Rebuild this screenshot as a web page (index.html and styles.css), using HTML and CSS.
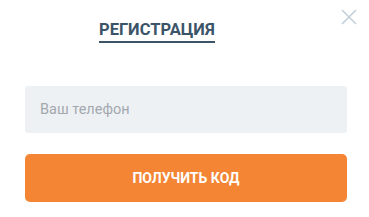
FILE: index.html
```html
<!DOCTYPE html>
<html lang="ru">
<head>
<meta charset="utf-8">
<link rel="stylesheet" href="styles.css">
</head>
<body>
<div class="modal">
  <div class="head">
    <span class="tab">РЕГИСТРАЦИЯ</span>
    <button class="close" aria-label="Закрыть">
      <svg width="16" height="16" viewBox="0 0 16 16"><path d="M1 1L15 15M15 1L1 15" stroke="#c3d0dc" stroke-width="1.6" fill="none"/></svg>
    </button>
  </div>
  <div class="form">
    <div class="field">Ваш телефон</div>
    <button class="submit">ПОЛУЧИТЬ КОД</button>
  </div>
</div>
</body>
</html>
```
FILE: styles.css
```css
html, body { margin: 0; padding: 0; background: #fff; }
body { font-family: Roboto, "Liberation Sans", sans-serif; }
.modal { width: 369px; height: 217px; position: relative; box-sizing: border-box; padding: 0 22px 0 25px; }
.head { height: 86px; box-sizing: border-box; padding-top: 20px; padding-left: 74px; }
.tab { display: inline-block; font-size: 16.5px; font-weight: 700; color: #3b5468; line-height: 20px; padding-bottom: 1px; border-bottom: 2px solid #3b5468; }
.close { position: absolute; top: 9px; right: 12px; width: 16px; height: 16px; padding: 0; border: 0; background: none; display: block; }
.close svg { display: block; }
.form { display: flex; flex-direction: column; gap: 21px; }
.field { height: 47px; box-sizing: border-box; background: #eef1f4; border-radius: 3px; padding-left: 15px; display: flex; align-items: center; font-size: 14.5px; color: #a3a8ae; }
.submit { height: 48px; border: 0; border-radius: 5px; background: #f48534; color: #fff; font-family: Roboto, "Liberation Sans", sans-serif; font-size: 14px; font-weight: 700; padding: 0; }
```
